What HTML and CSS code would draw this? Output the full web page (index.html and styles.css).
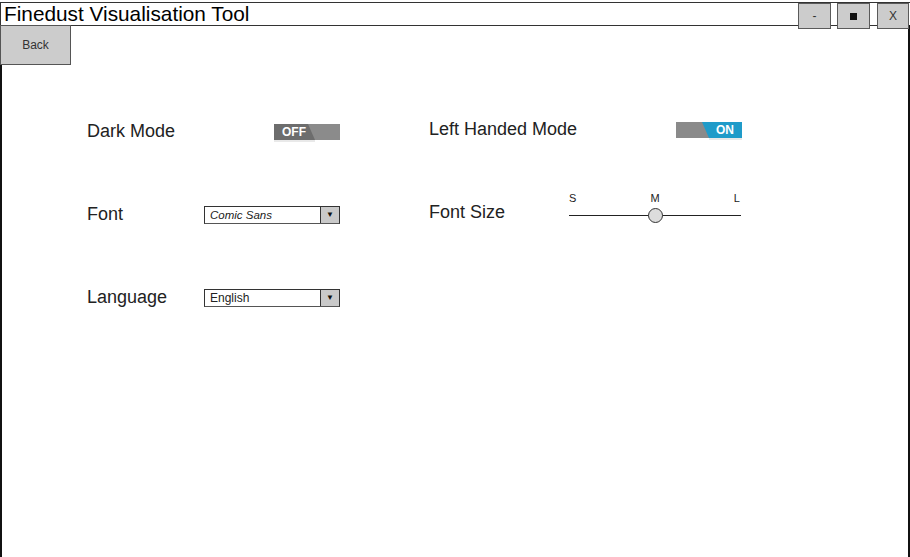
FILE: index.html
```html
<!DOCTYPE html>
<html>
<head>
<meta charset="utf-8">
<link rel="stylesheet" href="styles.css">
</head>
<body>
<div class="window">
  <header class="titlebar"><span class="title">Finedust Visualisation Tool</span></header>
  <div class="winctrls">
    <div class="wbtn">-</div>
    <div class="wbtn"><span class="sq"></span></div>
    <div class="wbtn">X</div>
  </div>
  <main class="body">
    <div class="back">Back</div>
    <div class="settings">
      <div class="label">Dark Mode</div>
      <div class="ctrl end">
        <svg class="toggle" width="66" height="18" viewBox="0 0 66 18">
          <rect x="0" y="0" width="66" height="16" fill="#8b8b8b"/>
          <polygon points="0,0 34,0 41,16 0,16" fill="#6d6d6d"/>
          <line x1="0" y1="17" x2="41" y2="17" stroke="#e2e2e2" stroke-width="1.4"/>
          <text x="20" y="12.3" text-anchor="middle" class="tgtext">OFF</text>
        </svg>
      </div>
      <div></div>
      <div class="label up">Left Handed Mode</div>
      <div class="ctrl end up2">
        <svg class="toggle" width="66" height="18" viewBox="0 0 66 18">
          <rect x="0" y="0" width="66" height="16" fill="#1f9bc9"/>
          <polygon points="0,0 26,0 33,16 0,16" fill="#8a8a8a"/>
          <line x1="33" y1="17" x2="66" y2="17" stroke="#e2e2e2" stroke-width="1.4"/>
          <text x="49" y="12.3" text-anchor="middle" class="tgtext">ON</text>
        </svg>
      </div>

      <div class="label">Font</div>
      <div class="ctrl">
        <div class="dropdown"><span class="dtext">Comic Sans</span><span class="arrow">▼</span></div>
      </div>
      <div></div>
      <div class="label up">Font Size</div>
      <div class="ctrl slider-cell">
        <div class="slider">
          <div class="marks"><span>S</span><span>M</span><span>L</span></div>
          <div class="track"><span class="knob"></span></div>
        </div>
      </div>

      <div class="label">Language</div>
      <div class="ctrl">
        <div class="dropdown"><span class="dtext plain">English</span><span class="arrow">▼</span></div>
      </div>
    </div>
  </main>
</div>
</body>
</html>
```
FILE: styles.css
```css
* { box-sizing: border-box; }
html, body { margin: 0; padding: 0; background: #fff; }
body { width: 910px; height: 557px; overflow: hidden; font-family: "Liberation Sans", Arial, sans-serif; }

.window { position: relative; height: 557px; padding-top: 2px; }

.titlebar {
  height: 24px;
  border: 1px solid #333;
  border-right: none;
  display: flex;
  align-items: center;
  padding-left: 3px;
}
.title {
  font-family: "Comic Sans MS", "Liberation Sans", sans-serif;
  font-size: 20.8px;
  color: #000;
  line-height: 1;
  margin-top: 1px;
}

.winctrls {
  position: absolute;
  top: 3px;
  right: 1px;
  display: flex;
  gap: 6px;
}
.wbtn {
  width: 33px;
  height: 26px;
  background: #cccccc;
  border: 1px solid #5a5a5a;
  display: flex;
  align-items: center;
  justify-content: center;
  font-size: 12px;
  color: #333;
}
.wbtn:nth-child(3) { width: 32px; margin-left: 1px; }
.sq { width: 7px; height: 7px; background: #111; }

.body {
  height: 532px;
  border-left: 2px solid #111;
  border-right: 2px solid #111;
  margin-top: -1px;
}

.back {
  width: 71px;
  height: 40px;
  margin-left: -2px;
  background: #cccccc;
  border: 1px solid #555;
  display: flex;
  align-items: center;
  justify-content: center;
  font-size: 12px;
  color: #333;
}

.settings {
  margin-top: 25px;
  margin-left: 85px;
  display: grid;
  grid-template-columns: 117px 136px 89px 140px 173px;
  grid-auto-rows: 83px;
  align-items: center;
}
.label {
  font-size: 18px;
  color: #222;
  line-height: 20px;
  white-space: nowrap;
  margin-bottom: 2px;
}
.label.up { margin-bottom: 6px; }
.ctrl { display: flex; }
.ctrl.end { justify-content: flex-end; }
.up2 { margin-bottom: 4px; }
.toggle { display: block; margin-top: 2px; }
.tgtext { font-family: "Liberation Sans", Arial, sans-serif; font-weight: bold; font-size: 12px; fill: #fff; }

.dropdown {
  width: 136px;
  height: 18px;
  border: 1px solid #333;
  border-bottom-color: #555;
  display: flex;
  align-items: stretch;
  background: #fff;
}
.dtext {
  flex: 1;
  padding-left: 5px;
  font-family: "Comic Sans MS", "Liberation Sans", sans-serif;
  font-style: italic;
  font-size: 11.5px;
  color: #222;
  line-height: 16px;
}
.dtext.plain { font-style: normal; font-size: 12px; }
.arrow {
  width: 19px;
  background: #c9c9c9;
  border-left: 1px solid #333;
  font-size: 8px;
  color: #111;
  display: flex;
  align-items: center;
  justify-content: center;
}

.slider-cell { align-self: start; margin-top: 19px; }
.slider { width: 173px; }
.marks {
  display: flex;
  justify-content: space-between;
  padding: 0 2px 0 0;
  font-size: 11px;
  color: #222;
  line-height: 12px;
}
.track {
  position: relative;
  height: 16px;
  margin-top: 4px;
  margin-right: 1px;
}
.track::before {
  content: "";
  position: absolute;
  left: 0; right: 0; top: 7px;
  height: 1px;
  background: #222;
}
.knob {
  position: absolute;
  left: 79px;
  top: 0;
  width: 15px;
  height: 15px;
  border-radius: 50%;
  background: #dcdcdc;
  border: 1px solid #333;
}
```
